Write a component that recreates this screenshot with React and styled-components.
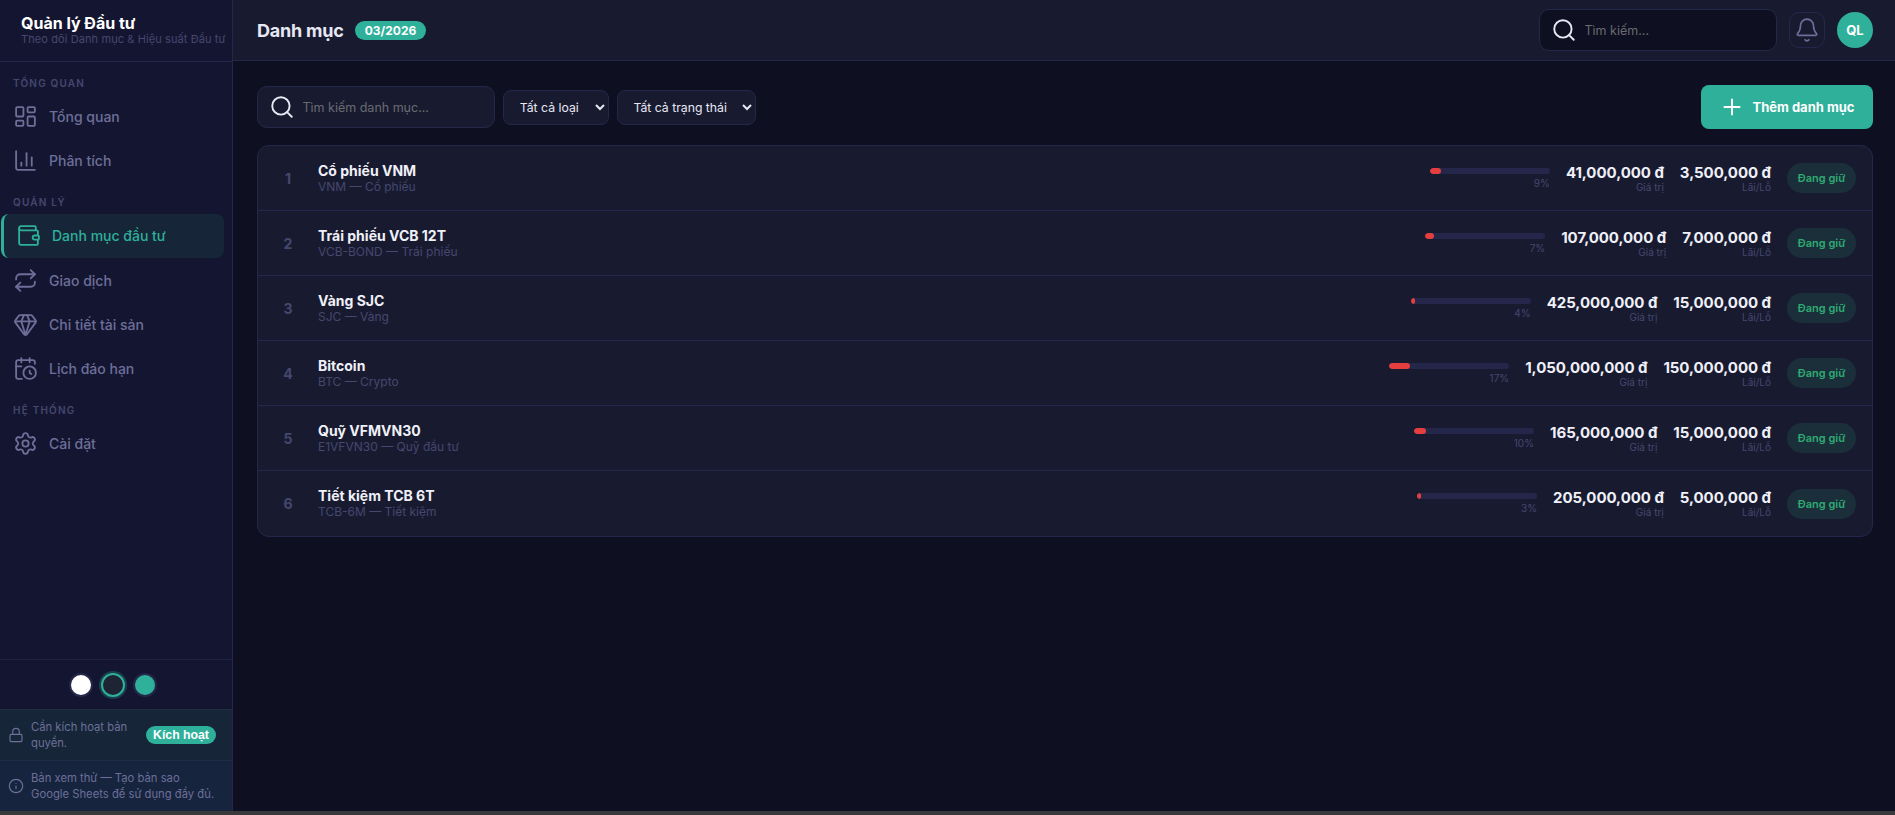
import React from "react";
import styled, { createGlobalStyle } from "styled-components";
import {
  LayoutDashboard,
  ChartColumn,
  Wallet,
  Repeat,
  Gem,
  CalendarClock,
  Settings,
  Lock,
  Info,
  Search,
  Bell,
  Plus,
} from "lucide-react";

const GlobalStyle = createGlobalStyle`
  * { box-sizing: border-box; }
  html, body { margin: 0; padding: 0; height: 100%; background: #3a3a3c; }
  body { font-family: Inter, "Noto Sans", sans-serif; overflow: hidden; }
`;

const Shell = styled.div`
  display: flex;
  height: 811px;
  background: #0e0f20;
  color: #e8e8f4;
`;

const Sidebar = styled.aside`
  width: 233px;
  flex: none;
  display: flex;
  flex-direction: column;
  background: #141631;
  border-right: 1px solid #25274a;
`;

const Brand = styled.div`
  height: 62px;
  padding: 14px 0 0 21px;
  border-bottom: 1px solid #25274a;
  flex: none;
`;

const BrandTitle = styled.div`
  font-size: 16px;
  line-height: 18px;
  font-weight: 700;
  color: #fff;
`;

const BrandSub = styled.div`
  font-size: 11px;
  line-height: 14px;
  letter-spacing: 0.1px;
  color: #45476f;
  white-space: nowrap;
`;

const Nav = styled.nav`
  flex: 1;
  display: flex;
  flex-direction: column;
  padding-top: 1.5px;
`;

const SectionLabel = styled.div`
  padding: 13.5px 0 5.5px 13px;
  font-size: 10px;
  line-height: 12px;
  font-weight: 600;
  letter-spacing: 1.2px;
  color: #45476f;
`;

const NavItem = styled.div`
  height: 44.2px;
  flex: none;
  display: flex;
  align-items: center;
  gap: 11.5px;
  font-size: 14px;
  font-weight: 500;
  color: ${(p) => (p.$active ? "#2eb09a" : "#6d6f99")};
  margin: 0 8px 0 ${(p) => (p.$active ? "1px" : "0")};
  padding-left: ${(p) => (p.$active ? "11.5px" : "12.5px")};
  background: ${(p) => (p.$active ? "#162638" : "transparent")};
  border-left: ${(p) => (p.$active ? "3px solid #2eb09a" : "0")};
  border-radius: ${(p) => (p.$active ? "8px" : "0")};
`;

const ThemeRow = styled.div`
  height: 50px;
  flex: none;
  display: flex;
  align-items: center;
  justify-content: center;
  gap: 8px;
  padding-right: 6px;
  border-top: 1px solid #1f2140;
`;

const ThemeDot = styled.div`
  width: 24px;
  height: 24px;
  border-radius: 50%;
  background: ${(p) => p.$color};
  border: ${(p) => (p.$active ? "2px solid #2eb09a" : "2px solid #25274a")};
  box-shadow: ${(p) => (p.$active ? "0 0 0 2px #2eb09a44" : "none")};
`;

const Notice = styled.div`
  height: 51px;
  flex: none;
  display: flex;
  align-items: center;
  gap: 7px;
  padding-left: 8px;
  background: ${(p) => p.$bg};
  border-top: 1px solid #1f2c44;
  font-size: 11.25px;
  line-height: 16px;
  color: #6d6f99;
  svg { flex: none; }
`;

const LicenseText = styled.div`
  width: 100px;
  flex: none;
`;

const PreviewText = styled.div`
  white-space: nowrap;
`;

const ActivateBtn = styled.div`
  margin-left: 8px;
  height: 18px;
  width: 70px;
  flex: none;
  border-radius: 9px;
  background: #2eb09a;
  color: #fff;
  font-family: "Liberation Sans", Arial, sans-serif;
  font-size: 12.25px;
  font-weight: 700;
  line-height: 18px;
  text-align: center;
`;

const Main = styled.main`
  flex: 1;
  min-width: 0;
  display: flex;
  flex-direction: column;
`;

const Topbar = styled.header`
  height: 61px;
  flex: none;
  display: flex;
  align-items: center;
  padding: 0 22px 0 24px;
  background: #181b30;
  border-bottom: 1px solid #25274a;
`;

const PageTitle = styled.h1`
  margin: 0;
  font-size: 18px;
  font-weight: 700;
  letter-spacing: -0.2px;
  color: #e8e8f4;
`;

const PeriodBadge = styled.span`
  margin-left: 11px;
  height: 19px;
  padding: 0 10px;
  border-radius: 10px;
  background: #2eb09a;
  color: #fff;
  font-size: 12px;
  font-weight: 700;
  line-height: 19px;
`;

const SearchBox = styled.label`
  display: flex;
  align-items: center;
  gap: 7.5px;
  width: ${(p) => p.$width};
  height: 42px;
  padding-left: 11px;
  border: 1px solid #25274a;
  border-radius: 10px;
  background: ${(p) => p.$bg};
  color: #e8e8f4;
  svg { flex: none; }
`;

const SearchInput = styled.input`
  flex: 1;
  min-width: 0;
  padding: 0;
  border: 0;
  outline: 0;
  background: transparent;
  font: 400 12.5px Inter, sans-serif;
  color: #e8e8f4;
  &::placeholder { color: #6a6a70; }
`;

const TopSearch = styled(SearchBox)`
  margin-left: auto;
`;

const BellBtn = styled.div`
  width: 36px;
  height: 36px;
  margin-left: 12px;
  display: flex;
  align-items: center;
  justify-content: center;
  border: 1px solid #25274a;
  border-radius: 10px;
  color: #6d6f99;
`;

const Avatar = styled.div`
  width: 36px;
  height: 36px;
  margin-left: 12px;
  border-radius: 50%;
  background: #2eb09a;
  color: #fff;
  font-size: 13px;
  font-weight: 700;
  line-height: 36px;
  text-align: center;
`;

const Content = styled.div`
  flex: 1;
  padding: 24px 22px 0 24px;
`;

const Toolbar = styled.div`
  display: flex;
  align-items: center;
  gap: 8.2px;
  margin-bottom: 16px;
`;

const FilterSelect = styled.select`
  width: ${(p) => p.$width};
  height: 35px;
  padding: 0 4px 0 11.5px;
  border: 1px solid #25274a;
  border-radius: 8px;
  background: #181b30;
  color: #e8e8f4;
  font: 400 12.25px Inter, sans-serif;
  color-scheme: dark;
  outline: 0;
`;

const AddButton = styled.div`
  margin-left: auto;
  width: 172px;
  height: 44px;
  display: flex;
  align-items: center;
  justify-content: center;
  gap: 7px;
  border-radius: 8px;
  background: #2eb09a;
  color: #fff;
  font-size: 13px;
  font-weight: 700;
`;

const Panel = styled.section`
  background: #181b30;
  border: 1px solid #25274a;
  border-radius: 12px;
  overflow: hidden;
`;

const Row = styled.div`
  height: 65px;
  display: flex;
  align-items: center;
  gap: 16px;
  padding: 0 16px;
  border-bottom: 1px solid #25274a;
  &:last-child { border-bottom: 0; }
`;

const RowIndex = styled.div`
  width: 28px;
  flex: none;
  text-align: center;
  font-size: 14px;
  font-weight: 700;
  color: #45476f;
`;

const RowInfo = styled.div`
  flex: 1;
  min-width: 0;
`;

const RowName = styled.div`
  font-size: 14px;
  line-height: 16px;
  font-weight: 700;
  color: #f0f0f8;
`;

const RowSub = styled.div`
  font-size: 12px;
  line-height: 15px;
  color: #45476f;
`;

const Share = styled.div`
  width: 120px;
  flex: none;
`;

const ShareTrack = styled.div`
  height: 6px;
  border-radius: 3px;
  background: #25274a;
  overflow: hidden;
`;

const ShareFill = styled.div`
  height: 100%;
  border-radius: 3px;
  background: #e53e3e;
`;

const SharePct = styled.div`
  margin-top: 3px;
  text-align: right;
  font-size: 10px;
  line-height: 12px;
  color: #45476f;
`;

const Amount = styled.div`
  flex: none;
  text-align: right;
`;

const AmountValue = styled.div`
  font-size: 15px;
  line-height: 18px;
  font-weight: 700;
  letter-spacing: -0.04px;
  color: #f0f0f8;
  white-space: nowrap;
`;

const AmountLabel = styled.div`
  font-size: 10px;
  line-height: 11px;
  color: #45476f;
`;

const StatusPill = styled.div`
  width: 69px;
  height: 30px;
  flex: none;
  border-radius: 15px;
  background: #1b2f3b;
  color: #2eaa72;
  font-size: 11px;
  font-weight: 600;
  line-height: 30px;
  text-align: center;
`;

const holdings = [
  { name: "Cổ phiếu VNM", sub: "VNM — Cổ phiếu", pct: 9, value: "41,000,000 đ", pnl: "3,500,000 đ" },
  { name: "Trái phiếu VCB 12T", sub: "VCB-BOND — Trái phiếu", pct: 7, value: "107,000,000 đ", pnl: "7,000,000 đ" },
  { name: "Vàng SJC", sub: "SJC — Vàng", pct: 4, value: "425,000,000 đ", pnl: "15,000,000 đ" },
  { name: "Bitcoin", sub: "BTC — Crypto", pct: 17, value: "1,050,000,000 đ", pnl: "150,000,000 đ" },
  { name: "Quỹ VFMVN30", sub: "E1VFVN30 — Quỹ đầu tư", pct: 10, value: "165,000,000 đ", pnl: "15,000,000 đ" },
  { name: "Tiết kiệm TCB 6T", sub: "TCB-6M — Tiết kiệm", pct: 3, value: "205,000,000 đ", pnl: "5,000,000 đ" },
];

export default function App() {
  return (
    <>
      <GlobalStyle />
      <Shell>
        <Sidebar>
          <Brand>
            <BrandTitle>Quản lý Đầu tư</BrandTitle>
            <BrandSub>Theo dõi Danh mục &amp; Hiệu suất Đầu tư</BrandSub>
          </Brand>
          <Nav>
            <SectionLabel>TỔNG QUAN</SectionLabel>
            <NavItem><LayoutDashboard size={25} strokeWidth={1.75} />Tổng quan</NavItem>
            <NavItem><ChartColumn size={25} strokeWidth={1.75} />Phân tích</NavItem>
            <SectionLabel>QUẢN LÝ</SectionLabel>
            <NavItem $active><Wallet size={25} strokeWidth={1.75} />Danh mục đầu tư</NavItem>
            <NavItem><Repeat size={25} strokeWidth={1.75} />Giao dịch</NavItem>
            <NavItem><Gem size={25} strokeWidth={1.75} />Chi tiết tài sản</NavItem>
            <NavItem><CalendarClock size={25} strokeWidth={1.75} />Lịch đáo hạn</NavItem>
            <SectionLabel>HỆ THỐNG</SectionLabel>
            <NavItem><Settings size={25} strokeWidth={1.75} />Cài đặt</NavItem>
          </Nav>
          <ThemeRow>
            <ThemeDot $color="#ffffff" />
            <ThemeDot $color="#1e2433" $active />
            <ThemeDot $color="#2eb09a" />
          </ThemeRow>
          <Notice $bg="#162638">
            <Lock size={16} strokeWidth={1.75} />
            <LicenseText>Cần kích hoạt bản quyền.</LicenseText>
            <ActivateBtn>Kích hoạt</ActivateBtn>
          </Notice>
          <Notice $bg="#16243e">
            <Info size={16} strokeWidth={1.75} />
            <PreviewText>Bản xem thử — Tạo bản sao<br />Google Sheets để sử dụng đầy đủ.</PreviewText>
          </Notice>
        </Sidebar>
        <Main>
          <Topbar>
            <PageTitle>Danh mục</PageTitle>
            <PeriodBadge>03/2026</PeriodBadge>
            <TopSearch $width="238px" $bg="#0e0f20">
              <Search size={26} strokeWidth={1.75} />
              <SearchInput placeholder="Tìm kiếm..." />
            </TopSearch>
            <BellBtn><Bell size={26} strokeWidth={1.5} /></BellBtn>
            <Avatar>QL</Avatar>
          </Topbar>
          <Content>
            <Toolbar>
              <SearchBox $width="238px" $bg="#181b30">
                <Search size={26} strokeWidth={1.75} />
                <SearchInput placeholder="Tìm kiếm danh mục..." />
              </SearchBox>
              <FilterSelect $width="105.5px">
                <option>Tất cả loại</option>
              </FilterSelect>
              <FilterSelect $width="139.5px">
                <option>Tất cả trạng thái</option>
              </FilterSelect>
              <AddButton><Plus size={26} strokeWidth={1.75} />Thêm danh mục</AddButton>
            </Toolbar>
            <Panel>
              {holdings.map((h, i) => (
                <Row key={h.name}>
                  <RowIndex>{i + 1}</RowIndex>
                  <RowInfo>
                    <RowName>{h.name}</RowName>
                    <RowSub>{h.sub}</RowSub>
                  </RowInfo>
                  <Share>
                    <ShareTrack>
                      <ShareFill style={{ width: `${h.pct}%` }} />
                    </ShareTrack>
                    <SharePct>{h.pct}%</SharePct>
                  </Share>
                  <Amount>
                    <AmountValue>{h.value}</AmountValue>
                    <AmountLabel>Giá trị</AmountLabel>
                  </Amount>
                  <Amount>
                    <AmountValue>{h.pnl}</AmountValue>
                    <AmountLabel>Lãi/Lỗ</AmountLabel>
                  </Amount>
                  <StatusPill>Đang giữ</StatusPill>
                </Row>
              ))}
            </Panel>
          </Content>
        </Main>
      </Shell>
    </>
  );
}
